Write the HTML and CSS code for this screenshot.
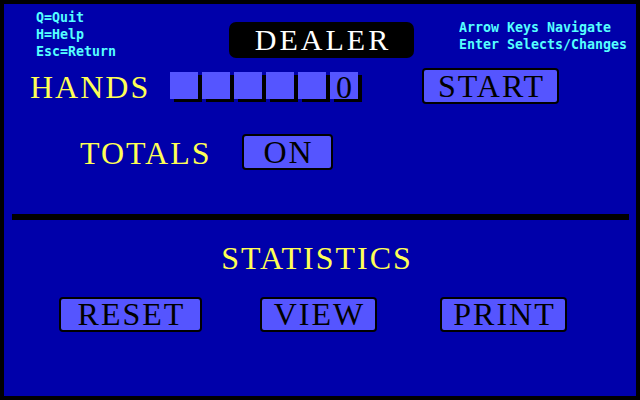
FILE: index.html
```html
<!DOCTYPE html>
<html>
<head>
<meta charset="utf-8">
<link rel="stylesheet" href="styles.css">
</head>
<body>
<div class="screen">
  <div class="header">
    <div class="help help-left">
      <div>Q=Quit</div>
      <div>H=Help</div>
      <div>Esc=Return</div>
    </div>
    <div class="title">DEALER</div>
    <div class="help help-right">
      <div>Arrow Keys Navigate</div>
      <div>Enter Selects/Changes</div>
    </div>
  </div>

  <div class="row row-hands">
    <div class="label label-hands">HANDS</div>
    <div class="digits">
      <span class="digit"></span>
      <span class="digit"></span>
      <span class="digit"></span>
      <span class="digit"></span>
      <span class="digit"></span>
      <span class="digit">0</span>
    </div>
    <div class="btn btn-start">START</div>
  </div>

  <div class="row row-totals">
    <div class="label label-totals">TOTALS</div>
    <div class="btn btn-on">ON</div>
  </div>

  <div class="divider"></div>

  <div class="section-title">STATISTICS</div>

  <div class="row row-stats">
    <div class="btn btn-reset">RESET</div>
    <div class="btn btn-view">VIEW</div>
    <div class="btn btn-print">PRINT</div>
  </div>
</div>
</body>
</html>
```

FILE: styles.css
```css
html, body {
  margin: 0;
  padding: 0;
  background: #000;
}
body {
  width: 640px;
  height: 400px;
  overflow: hidden;
}
.screen {
  margin: 4px;
  width: 632px;
  height: 392px;
  background: #0000aa;
  display: flex;
  flex-direction: column;
  font-family: "Liberation Serif", "Times New Roman", serif;
}

/* header */
.header {
  height: 64px;
  display: grid;
  grid-template-columns: 225px 185px 1fr;
  align-items: start;
}
.help {
  font-family: "DejaVu Sans Mono", "Liberation Mono", monospace;
  font-weight: bold;
  font-size: 20px;
  line-height: 23.3px;
  color: #55ffff;
  white-space: nowrap;
  transform: scale(0.664, 0.73);
  transform-origin: 0 0;
}
.help-left {
  margin-left: 32px;
  margin-top: 5px;
}
.help-right {
  margin-left: 45px;
  margin-top: 15px;
}
.title {
  margin-top: 18px;
  height: 36px;
  background: #000;
  border-radius: 7px;
  color: #fff;
  font-size: 30px;
  letter-spacing: 3px;
  line-height: 36px;
  text-align: center;
  padding-left: 3px;
}

/* rows */
.row {
  display: flex;
  align-items: center;
}
.row-hands {
  height: 36px;
}
.label {
  color: #ffff55;
  font-size: 32px;
  line-height: 36px;
  letter-spacing: 2px;
  padding-top: 2px;
}
.label-hands {
  width: 140px;
  padding-left: 26px;
}
.digits {
  display: flex;
  gap: 4px;
  width: 252px;
}
.digit {
  width: 28px;
  height: 27px;
  background: #5555ff;
  box-shadow: 4px 3px 0 #000;
  color: #000;
  font-size: 32px;
  line-height: 27px;
  text-align: center;
  padding-top: 2px;
  box-sizing: border-box;
  margin-top: -2px;
}
.btn {
  box-sizing: border-box;
  height: 36px;
  border: 2px solid #000;
  border-radius: 4px;
  background: #5555ff;
  color: #000;
  font-size: 32px;
  line-height: 32px;
  letter-spacing: 2px;
  text-align: center;
  padding-left: 2px;
}
.btn-start {
  width: 137px;
}
.row-totals {
  margin-top: 30px;
  height: 36px;
}
.label-totals {
  width: 162px;
  padding-left: 76px;
}
.btn-on {
  width: 91px;
}

.divider {
  margin: 44px 7px 0 8px;
  height: 6px;
  background: #000;
}

.section-title {
  margin-top: 20px;
  color: #ffff55;
  font-size: 32px;
  line-height: 36px;
  letter-spacing: 2px;
  text-align: center;
  padding-right: 6px;
}

.row-stats {
  margin-top: 21px;
  padding-left: 55px;
}
.row-stats .btn {
  height: 35px;
  line-height: 31px;
}
.btn-reset {
  width: 143px;
}
.btn-view {
  width: 117px;
  margin-left: 58px;
}
.btn-print {
  width: 127px;
  margin-left: 63px;
}
```
